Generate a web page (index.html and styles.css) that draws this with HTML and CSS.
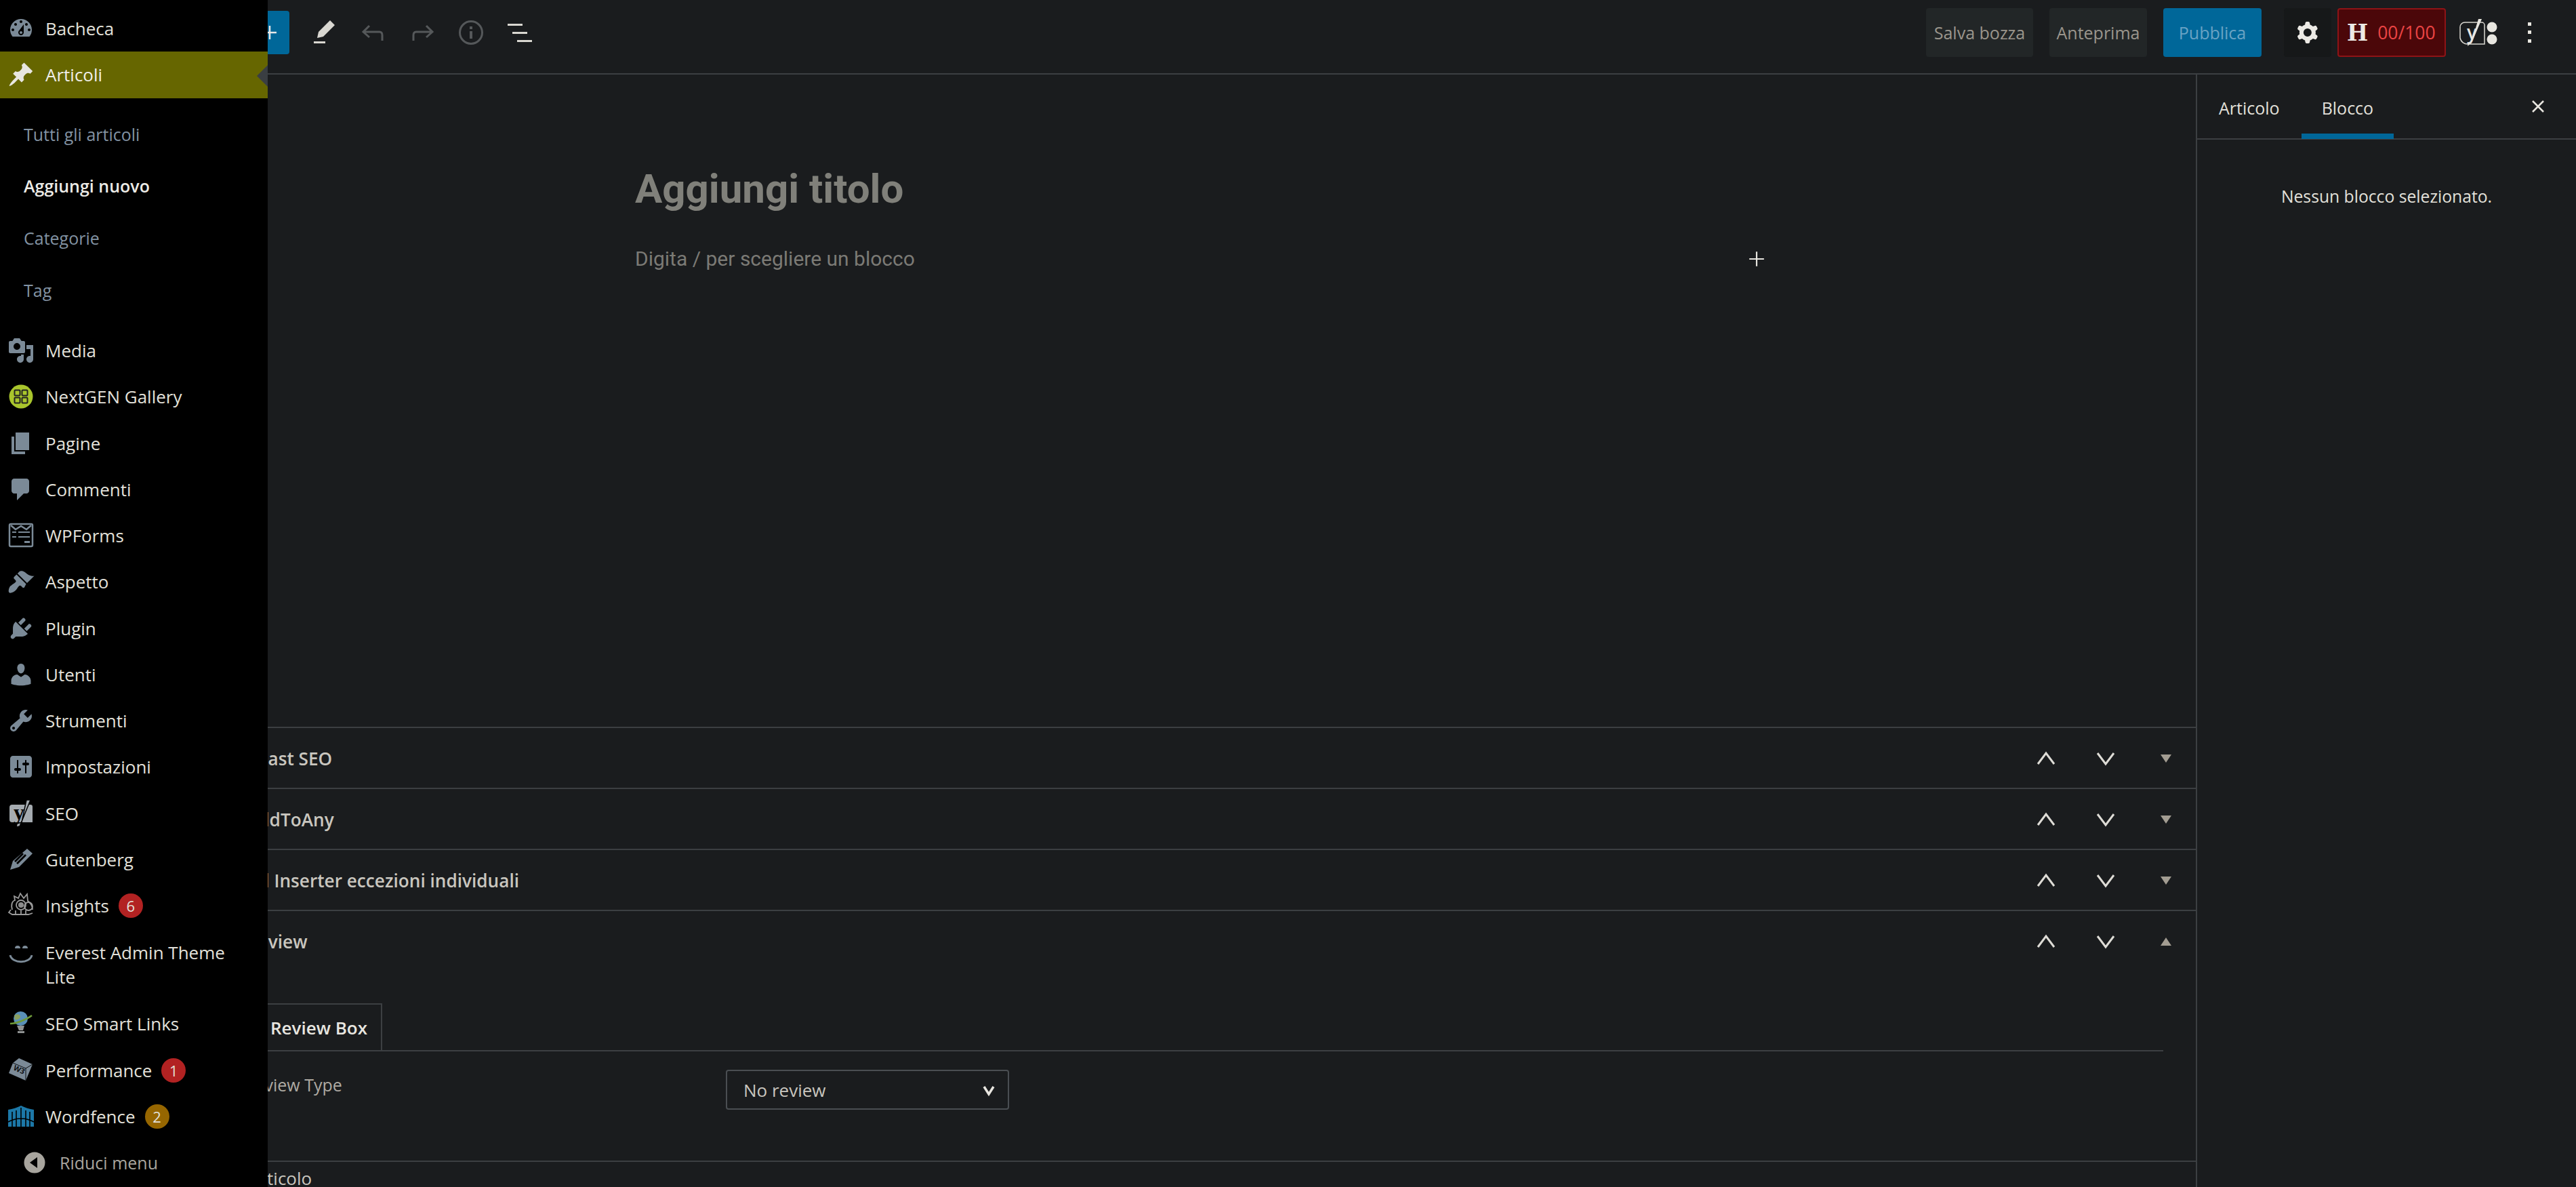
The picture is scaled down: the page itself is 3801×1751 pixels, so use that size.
FILE: index.html
```html
<!DOCTYPE html>
<html lang="it">
<head>
    <meta charset="UTF-8">
    <title>Aggiungi nuovo articolo</title>
    <link rel="stylesheet" href="styles.css">
</head>
<body>
    <nav class="adminmenu">
        <a class="menu-item"><svg class="menu-icon" viewBox="0 0 20 20"><path fill-rule="evenodd" d="M3.76 16h12.48c1.1-1.37 1.76-3.11 1.76-5 0-4.42-3.58-8-8-8s-8 3.58-8 8c0 1.89.66 3.63 1.76 5zM10 4c.55 0 1 .45 1 1s-.45 1-1 1-1-.45-1-1 .45-1 1-1zM6 6c.55 0 1 .45 1 1s-.45 1-1 1-1-.45-1-1 .45-1 1-1zm8 0c.55 0 1 .45 1 1s-.45 1-1 1-1-.45-1-1 .45-1 1-1zm-5.37 5.55L12 7v6c0 1.1-.9 2-2 2s-2-.9-2-2c0-.57.24-1.08.63-1.45zM4 10c.55 0 1 .45 1 1s-.45 1-1 1-1-.45-1-1 .45-1 1-1zm12 0c.55 0 1 .45 1 1s-.45 1-1 1-1-.45-1-1 .45-1 1-1zm-5 3c0-.55-.45-1-1-1s-1 .45-1 1 .45 1 1 1 1-.45 1-1z"/></svg>Bacheca</a>
        <a class="menu-item active"><svg class="menu-icon" viewBox="0 0 20 20"><path d="M10.44 3.02l1.82-1.82 6.36 6.35-1.83 1.82c-1.05-.68-2.48-.57-3.41.36l-.75.75c-.92.93-1.04 2.35-.35 3.41l-1.83 1.82-2.41-2.41-2.8 2.79c-.42.42-3.38 2.71-3.8 2.29s1.86-3.39 2.28-3.81l2.79-2.79L4.1 9.36l1.83-1.82c1.05.69 2.48.57 3.4-.36l.75-.75c.93-.92 1.05-2.35.36-3.41z"/></svg>Articoli</a>
        <div class="submenu">
            <a class="sub-item">Tutti gli articoli</a>
            <a class="sub-item current">Aggiungi nuovo</a>
            <a class="sub-item">Categorie</a>
            <a class="sub-item">Tag</a>
        </div>
        <a class="menu-item"><svg class="menu-icon" viewBox="0 0 20 20"><path fill-rule="evenodd" d="M13 11V4c0-.55-.45-1-1-1h-1.67L9 1H5L3.67 3H2c-.55 0-1 .45-1 1v7c0 .55.45 1 1 1h10c.55 0 1-.45 1-1zM7 4.5c1.38 0 2.5 1.12 2.5 2.5S8.38 9.5 7 9.5 4.5 8.38 4.5 7 5.62 4.5 7 4.5zM14 6h5v10.5c0 1.38-1.12 2.5-2.5 2.5S14 17.88 14 16.5s1.12-2.5 2.5-2.5c.17 0 .34.02.5.05V9h-3V6zm-4 8.05V13h2v3.5c0 1.38-1.12 2.5-2.5 2.5S7 17.88 7 16.5 8.12 14 9.5 14c.17 0 .34.02.5.05z"/></svg>Media</a>
        <a class="menu-item"><svg class="menu-icon" viewBox="0 0 40 40"><circle class="lime" cx="20" cy="20" r="17.5"/><g class="lime-cells"><rect x="10.5" y="10.5" width="8" height="8" rx="1"/><rect x="21.5" y="10.5" width="8" height="8" rx="1"/><rect x="10.5" y="21.5" width="8" height="8" rx="1"/><rect x="21.5" y="21.5" width="8" height="8" rx="1"/></g></svg>NextGEN Gallery</a>
        <a class="menu-item"><svg class="menu-icon" viewBox="0 0 20 20"><path d="M6 15V2h10v13H6zm-1 1h8v2H3V5h2v11z"/></svg>Pagine</a>
        <a class="menu-item"><svg class="menu-icon" viewBox="0 0 20 20"><path d="M5 2h9c1.1 0 2 .9 2 2v7c0 1.1-.9 2-2 2h-2l-5 5v-5H5c-1.1 0-2-.9-2-2V4c0-1.1.9-2 2-2z"/></svg>Commenti</a>
        <a class="menu-item"><svg class="menu-icon" viewBox="0 0 40 40"><g class="outline"><rect x="3" y="3" width="34" height="33" rx="2"/><path d="M5 5l7 6 8-5 8 5 7-6"/></g><path d="M7 14h6v2H7zM16 14h17v2H16zM7 21h6v2H7zM16 21h17v2H16zM25 28h8v3h-8z"/></svg>WPForms</a>
        <a class="menu-item"><svg class="menu-icon" viewBox="0 0 20 20"><path d="M14.48 11.06L7.41 3.99l1.5-1.5c.5-.56 2.3-.47 3.51.32 1.21.8 1.43 1.28 2.91 2.1 1.18.64 2.45 1.26 4.45.85zm-.71.71L6.7 4.7 4.93 6.47c-.39.39-.39 1.02 0 1.41l1.06 1.06c.39.39.39 1.03 0 1.42-.6.6-1.43 1.11-2.21 1.69-.35.26-.7.53-1.01.84C1.43 13.23.28 16.99 1.2 18.01c.88.97 3.56-.34 4.88-1.63.32-.32.59-.67.84-1.02.56-.8 1.07-1.62 1.68-2.22.39-.39 1.02-.39 1.41 0l1.06 1.06c.39.39 1.02.39 1.41 0z"/></svg>Aspetto</a>
        <a class="menu-item"><svg class="menu-icon" viewBox="0 0 20 20"><path d="M13.11 4.36L9.87 7.6 8 5.73l3.24-3.24c.35-.34 1.05-.2 1.56.32.52.51.66 1.21.31 1.55zm-8 1.77l.91-1.12 9.01 9.01-1.19.84c-.71.71-2.63 1.16-3.82 1.16H6.14L4.9 17.26c-.59.59-1.54.59-2.12 0-.59-.58-.59-1.53 0-2.12l1.24-1.24v-3.88c0-1.13.4-3.19 1.09-3.89zm7.26 3.97l3.24-3.24c.34-.35 1.04-.21 1.55.31.52.51.66 1.21.31 1.55l-3.24 3.25z"/></svg>Plugin</a>
        <a class="menu-item"><svg class="menu-icon" viewBox="0 0 20 20"><path d="M10 9.25c-2.27 0-2.73-3.44-2.73-3.44C7 4.02 7.82 2 9.97 2c2.16 0 2.98 2.02 2.71 3.81 0 0-.41 3.44-2.68 3.44zm0 2.57L12.72 10c2.39 0 4.52 2.33 4.52 4.53v2.49s-3.65 1.13-7.24 1.13c-3.65 0-7.24-1.13-7.24-1.13v-2.49c0-2.25 1.94-4.48 4.47-4.48z"/></svg>Utenti</a>
        <a class="menu-item"><svg class="menu-icon" viewBox="0 0 20 20"><path fill-rule="evenodd" d="M16.68 9.77c-1.34 1.34-3.3 1.67-4.95.99l-5.41 6.52c-.99.99-2.59.99-3.58 0s-.99-2.59 0-3.57l6.52-5.42c-.68-1.65-.35-3.61.99-4.95 1.28-1.28 3.12-1.62 4.72-1.06l-2.89 2.89 2.82 2.82 2.86-2.87c.53 1.58.18 3.39-1.08 4.65zM3.81 16.21c.4.39 1.04.39 1.43 0 .4-.4.4-1.04 0-1.43-.39-.4-1.03-.4-1.43 0-.39.39-.39 1.03 0 1.43z"/></svg>Strumenti</a>
        <a class="menu-item"><svg class="menu-icon" viewBox="0 0 20 20"><path fill-rule="evenodd" d="M18 16V4c0-1.1-.9-2-2-2H4c-1.1 0-2 .9-2 2v12c0 1.1.9 2 2 2h12c1.1 0 2-.9 2-2zM8 11h1c.55 0 1 .45 1 1s-.45 1-1 1H8v1.5c0 .28-.22.5-.5.5s-.5-.22-.5-.5V13H6c-.55 0-1-.45-1-1s.45-1 1-1h1V5.5c0-.28.22-.5.5-.5s.5.22.5.5V11zm5-2h-1c-.55 0-1-.45-1-1s.45-1 1-1h1V5.5c0-.28.22-.5.5-.5s.5.22.5.5V7h1c.55 0 1 .45 1 1s-.45 1-1 1h-1v5.5c0 .28-.22.5-.5.5s-.5-.22-.5-.5V9z"/></svg>Impostazioni</a>
        <a class="menu-item"><svg class="menu-icon seo" viewBox="0 0 40 40"><path d="M7 7h27a3 3 0 0 1 3 3v23H7a4 4 0 0 1-4-4V11a4 4 0 0 1 4-4z"/><text class="seo-y" x="9" y="29">y</text><path class="seo-slash" d="M28 0h6L18 39l-5 1 1-5 7-2z"/></svg>SEO</a>
        <a class="menu-item"><svg class="menu-icon" viewBox="0 0 40 40"><path fill-rule="evenodd" d="M29 4l8 7-20 20-13 4 4-13zM26 12L13 25l2 2 13-13zM22 10L10 22l2 2 12-12z"/></svg>Gutenberg</a>
        <a class="menu-item"><svg class="menu-icon" viewBox="0 0 40 40"><g class="crest"><path d="M7 26C5 18 7 13 11 12l-1-6 6 3 3-7 5 7 5-6 1 10c4 3 7 8 7 13"/><path d="M5 26l-3 4 5 3h24l6-2"/><circle cx="20" cy="19" r="7"/><circle cx="31" cy="21" r="6"/><path d="M12 27v6M20 27v6M27 27v6"/></g><circle class="crest-eye" cx="20" cy="19" r="4"/></svg>Insights<span class="count">6</span></a>
        <a class="menu-item tall"><svg class="menu-icon" viewBox="0 0 40 40"><path d="M11 12a4 4 0 0 1 8 0zM22 12a4 4 0 0 1 8 0z"/><path class="smile" d="M4 22c3 13 29 13 32 0"/></svg><span>Everest Admin Theme Lite</span></a>
        <a class="menu-item"><svg class="menu-icon" viewBox="0 0 40 40"><path class="stem" d="M14 23h11l-2 7h-6zM15 31h10v3H15z"/><circle class="globe" cx="19.5" cy="12.5" r="10.5"/><path class="land" d="M10 8c4-3 8-2 9 1s-4 6-8 5z"/><path class="ring" d="M4 20C13 20 28 14 36 8"/></svg>SEO Smart Links</a>
        <a class="menu-item"><svg class="menu-icon" viewBox="0 0 40 40"><path d="M17 2l20 9-10 24L2 24 8 9z"/><path class="cube-line" d="M8 9l19 8 10-6M27 17v18"/><text class="cube-w3" transform="translate(8 19) rotate(24)">W3</text></svg>Performance<span class="count">1</span></a>
        <a class="menu-item"><svg class="menu-icon" viewBox="0 0 40 40"><path class="fence" d="M1 10c7-1 13-3 19-6 6 3 12 5 19 6v25H1z"/><path class="gate" d="M7 13v22M13 11v24M20 7v28M27 11v24M33 13v22M1 28q19-10 38 0"/></svg>Wordfence<span class="count warn">2</span></a>
        <a class="collapse"><svg class="collapse-icon" viewBox="0 0 32 32"><circle cx="16" cy="16" r="15.5"/><path class="collapse-arrow" d="M20 8v16L9 16z"/></svg>Riduci menu</a>
    </nav>
    <div class="editor">
        <header class="topbar">
            <div class="tools">
                <button class="inserter"><svg viewBox="0 0 24 24"><path d="M11 4h2v7h7v2h-7v7h-2v-7H4v-2h7z"/></svg></button>
                <svg class="tool" viewBox="0 0 36 40"><path d="M26 2l7 7-17 17-9 2 2-9zM2 33h17v3H2z"/></svg>
                <svg class="tool dim" viewBox="0 0 36 40"><path class="stroke" d="M12 10l-9 9 9 8M3 19h24c3 0 4 2 4 5v8"/></svg>
                <svg class="tool dim" viewBox="0 0 36 40"><path class="stroke" d="M24 10l9 9-9 8M33 19H9c-3 0-4 2-4 5v8"/></svg>
                <svg class="tool dim" viewBox="0 0 36 40"><circle class="stroke" cx="18" cy="20" r="16.5"/><path d="M16 11h4v4h-4zM16 18h4v11h-4z"/></svg>
                <svg class="tool" viewBox="0 0 36 40"><path d="M0 7h22v3H0zM7 19h22v3H7zM14 31h22v3H14z"/></svg>
            </div>
            <div class="actions">
                <button class="ghost">Salva bozza</button>
                <button class="ghost">Anteprima</button>
                <button class="publish">Pubblica</button>
                <button class="gear"><svg viewBox="0 0 24 24"><path fill-rule="evenodd" d="M10.289 4.836A1 1 0 0111.275 4h1.306a1 1 0 01.987.836l.244 1.466c.787.26 1.503.679 2.108 1.218l1.393-.522a1 1 0 011.216.437l.653 1.13a1 1 0 01-.23 1.273l-1.148.944a6.025 6.025 0 010 2.435l1.149.946a1 1 0 01.23 1.272l-.653 1.13a1 1 0 01-1.216.437l-1.394-.522c-.605.54-1.32.958-2.108 1.218l-.244 1.466a1 1 0 01-.987.836h-1.306a1 1 0 01-.986-.836l-.244-1.466a5.995 5.995 0 01-2.108-1.218l-1.394.522a1 1 0 01-1.217-.436l-.653-1.131a1 1 0 01.23-1.272l1.149-.946a6.026 6.026 0 010-2.435l-1.148-.944a1 1 0 01-.23-1.272l.653-1.131a1 1 0 011.217-.437l1.393.522a5.994 5.994 0 012.108-1.218l.244-1.466zM14.929 12a3 3 0 11-6 0 3 3 0 016 0z"/></svg></button>
                <div class="score"><b>H</b><span>00/100</span></div>
                <svg class="yoast" viewBox="0 0 56 44"><path class="yoast-box" d="M8 7h25a4 4 0 0 1 4 4v28H13a11 11 0 0 1-12-9V14a7 7 0 0 1 7-7z"/><text x="11" y="32">y</text><path d="M28 2h5L18 37l-6 5 1-5 5-2z"/><circle cx="48" cy="14" r="7.5"/><circle cx="48" cy="32" r="7.5"/></svg>
                <svg class="kebab" viewBox="0 0 8 32"><path d="M1 1h5v5H1zM1 13h5v5H1zM1 26h5v5H1z"/></svg>
            </div>
        </header>
        <div class="workspace">
            <main class="main">
                <section class="canvas">
                    <h1 class="title">Aggiungi titolo</h1>
                    <div class="block">
                        <p class="placeholder">Digita / per scegliere un blocco</p>
                        <svg class="add" viewBox="0 0 24 24"><path d="M11 2h2v9h9v2h-9v9h-2v-9H2v-2h9z"/></svg>
                    </div>
                </section>
                <section class="metabox">
                    <h2>Yoast SEO</h2>
                    <svg class="chev" viewBox="0 0 28 28"><path d="M2 22L14 6l12 16"/></svg>
                    <svg class="chev" viewBox="0 0 28 28"><path d="M2 6l12 16L26 6"/></svg>
                    <i class="caret"></i>
                </section>
                <section class="metabox">
                    <h2>AddToAny</h2>
                    <svg class="chev" viewBox="0 0 28 28"><path d="M2 22L14 6l12 16"/></svg>
                    <svg class="chev" viewBox="0 0 28 28"><path d="M2 6l12 16L26 6"/></svg>
                    <i class="caret"></i>
                </section>
                <section class="metabox">
                    <h2>Ad Inserter eccezioni individuali</h2>
                    <svg class="chev" viewBox="0 0 28 28"><path d="M2 22L14 6l12 16"/></svg>
                    <svg class="chev" viewBox="0 0 28 28"><path d="M2 6l12 16L26 6"/></svg>
                    <i class="caret"></i>
                </section>
                <section class="metabox">
                    <h2>Review</h2>
                    <svg class="chev" viewBox="0 0 28 28"><path d="M2 22L14 6l12 16"/></svg>
                    <svg class="chev" viewBox="0 0 28 28"><path d="M2 6l12 16L26 6"/></svg>
                    <i class="caret up"></i>
                </section>
                <section class="review">
                    <div class="tabline"><div class="review-tab">Review Box</div></div>
                    <div class="field">
                        <label>Review Type</label>
                        <div class="select">No review<svg viewBox="0 0 20 20"><path d="M3 5l7 11 7-11"/></svg></div>
                    </div>
                </section>
                <footer class="crumb">Articolo</footer>
            </main>
            <aside class="settings">
                <div class="settings-tabs">
                    <span class="stab">Articolo</span>
                    <span class="stab on">Blocco</span>
                    <svg class="close" viewBox="0 0 20 20"><path d="M2 2l16 16M18 2L2 18"/></svg>
                </div>
                <p class="empty">Nessun blocco selezionato.</p>
            </aside>
        </div>
    </div>
</body>
</html>
```

FILE: styles.css
```css
* {
    box-sizing: border-box;
}
body {
    margin: 0;
    height: 100vh;
    overflow: hidden;
    background: #1a1c1e;
    color: #e2e0da;
    font-family: "Open Sans", "Noto Sans", sans-serif;
    font-size: 26px;
}
h1, h2, p {
    margin: 0;
}
button {
    font-family: inherit;
    border: none;
}

/* admin menu sits over the editor */
.adminmenu {
    position: absolute;
    left: 0;
    top: 0;
    bottom: 0;
    width: 395px;
    padding-top: 8px;
    background: #000;
    overflow: hidden;
    z-index: 2;
}
.menu-item {
    display: flex;
    align-items: center;
    height: 68.25px;
    padding-left: 11px;
    color: #e2e0da;
}
.menu-item.tall {
    align-items: flex-start;
    height: 106px;
    padding: 17px 40px 0 11px;
    line-height: 36px;
}
.menu-item.active {
    position: relative;
    background: #666600;
    color: #f0eee8;
}
.menu-item.active::after {
    content: "";
    position: absolute;
    right: 0;
    top: 20px;
    border: 16px solid transparent;
    border-left: 0;
    border-right-color: #3a3e42;
}
.menu-icon {
    flex: none;
    width: 40px;
    height: 40px;
    margin-right: 16px;
    fill: #7b8a97;
}
.active .menu-icon {
    fill: #e8e6e0;
}
.outline {
    fill: none;
    stroke: #7b8a97;
    stroke-width: 2.5;
}
.lime {
    fill: #a9c52c;
}
.lime-cells rect {
    fill: none;
    stroke: #222;
    stroke-width: 2;
}
.seo {
    fill: #a5abb0;
}
.seo-y {
    fill: #000;
    font-family: "Liberation Serif", serif;
    font-weight: bold;
    font-size: 32px;
}
.seo-slash {
    stroke: #000;
    stroke-width: 1.5;
}
.crest {
    fill: none;
    stroke: #9a9a9a;
    stroke-width: 1.8;
}
.crest-eye {
    fill: #8c8c8c;
}
.smile {
    fill: none;
    stroke: #7b8a97;
    stroke-width: 3;
}
.stem {
    fill: #8f9292;
}
.globe {
    fill: #5a90b8;
}
.land {
    fill: #8aa060;
}
.ring {
    fill: none;
    stroke: #6f9a3a;
    stroke-width: 2.5;
}
.cube-line {
    fill: none;
    stroke: #0d0f11;
    stroke-width: 1;
}
.cube-w3 {
    fill: #0d0f11;
    font-size: 11px;
    font-weight: 700;
}
.fence {
    fill: #1c78a8;
}
.gate {
    fill: none;
    stroke: #000;
    stroke-width: 1.6;
}
.count {
    display: inline-flex;
    align-items: center;
    justify-content: center;
    width: 36px;
    height: 36px;
    margin-left: 14px;
    border-radius: 50%;
    background: #b22222;
    font-size: 22px;
}
.count.warn {
    background: #966600;
}
.collapse {
    display: flex;
    align-items: center;
    height: 68px;
    padding-left: 35px;
    color: #a8a59e;
    font-size: 25px;
}
.collapse-icon {
    width: 32px;
    height: 32px;
    margin-right: 21px;
    fill: #a8a59e;
}
.collapse-arrow {
    fill: #000;
}
.submenu {
    padding: 15px 0 17px;
}
.sub-item {
    display: flex;
    align-items: center;
    height: 76.6px;
    padding-left: 35px;
    color: #8292a2;
    font-size: 25px;
}
.sub-item.current {
    color: #ecebe6;
    font-weight: 600;
}

/* editor */
.editor {
    display: flex;
    flex-direction: column;
    height: 100vh;
}
.topbar {
    display: flex;
    justify-content: space-between;
    align-items: center;
    flex: none;
    height: 110px;
    padding: 0 64px 12px 340px;
    border-bottom: 2px solid #3c3f42;
}
.tools, .actions {
    display: flex;
    align-items: center;
}
.inserter {
    display: flex;
    align-items: center;
    justify-content: flex-end;
    width: 87px;
    height: 64px;
    margin-right: 34px;
    padding: 0 14px;
    border-radius: 4px;
    background: #006799;
}
.inserter svg {
    width: 30px;
    height: 30px;
    fill: #e8e8e8;
}
.tool {
    width: 36px;
    height: 40px;
    margin-right: 36px;
    fill: #d9d7d1;
}
.tool.dim {
    fill: #55585a;
}
.stroke {
    fill: none;
    stroke: #55585a;
    stroke-width: 3;
}
.actions button, .score {
    height: 72px;
    border-radius: 4px;
    font-size: 25px;
}
.ghost {
    width: 158px;
    margin-right: 24px;
    background: #222627;
    color: #9a958c;
}
.ghost + .ghost {
    width: 144px;
}
.publish {
    width: 145px;
    margin-right: 33px;
    background: #006799;
    color: #6aa3c4;
}
.gear {
    display: flex;
    align-items: center;
    justify-content: center;
    width: 70px;
    margin-right: 9px;
    padding: 0;
    background: #161819;
}
.gear svg {
    width: 48px;
    height: 48px;
    fill: #eceae5;
}
.actions .score {
    display: flex;
    align-items: center;
    width: 160px;
    padding-left: 12px;
    border: 2px solid #8e1316;
    background: #4b0709;
    color: #ea4444;
    font-size: 26.5px;
}
.score b {
    margin-right: 14px;
    color: #eceae5;
    font-family: "DejaVu Serif", serif;
    font-size: 33px;
}
.yoast {
    width: 56px;
    height: 44px;
    margin-left: 20px;
    fill: #e8e6e0;
}
.yoast-box {
    fill: none;
    stroke: #d9d7d1;
    stroke-width: 1.5;
}
.yoast text {
    font-size: 28px;
    font-weight: 600;
}
.kebab {
    width: 8px;
    height: 32px;
    margin-left: 44px;
    fill: #e8e6e0;
}
.workspace {
    display: flex;
    flex: 1;
    min-height: 0;
}
.main {
    display: flex;
    flex-direction: column;
    flex: 1;
    min-width: 0;
}
.canvas {
    flex: 1;
    padding: 133px 0 0 937px;
    font-family: Roboto, sans-serif;
}
.title {
    color: #80807a;
    font-size: 60px;
    font-weight: 700;
    line-height: 72px;
}
.block {
    display: flex;
    align-items: center;
    justify-content: space-between;
    width: 1668px;
    margin-top: 45px;
}
.placeholder {
    color: #7b7a75;
    font-size: 30px;
    line-height: 44px;
}
.add {
    width: 26px;
    height: 26px;
    fill: #e8e6e0;
}
.metabox {
    display: flex;
    align-items: center;
    flex: none;
    height: 90px;
    padding: 2px 36px 0 364px;
    border-top: 2px solid #3c3f42;
}
.metabox h2 {
    flex: 1;
    color: #c9c6bf;
    font-size: 26.2px;
    font-weight: 600;
}
.chev {
    width: 28px;
    height: 28px;
    margin-left: 60px;
    fill: none;
    stroke: #dedcd6;
    stroke-width: 3;
}
.caret {
    width: 0;
    height: 0;
    margin-left: 67px;
    border: 8px solid transparent;
    border-top: 12px solid #a39d92;
    border-bottom: 0;
}
.caret.up {
    border-top: 0;
    border-bottom: 12px solid #a39d92;
}
.review {
    flex: none;
    height: 282px;
    padding: 0 48px 0 340px;
    border-bottom: 2px solid #3c3f42;
}
.tabline {
    display: flex;
    padding-top: 48px;
    border-bottom: 2px solid #3c3f42;
}
.review-tab {
    width: 224px;
    height: 69px;
    padding: 16px 0 0 57px;
    border: 2px solid #3c3f42;
    border-bottom: 0;
    color: #e8e6e0;
    font-weight: 600;
}
.field {
    display: flex;
    padding: 27px 0 0 21px;
}
.field label {
    width: 710px;
    padding-top: 5px;
    color: #aeaaa3;
    font-size: 25px;
}
.select {
    display: flex;
    align-items: center;
    justify-content: space-between;
    width: 418px;
    height: 59px;
    padding: 0 18px 0 24px;
    border: 2px solid #4a4e52;
    border-radius: 4px;
    color: #c9c6bf;
}
.select svg {
    width: 20px;
    height: 20px;
    fill: none;
    stroke: #e8e6e0;
    stroke-width: 3.5;
}
.crumb {
    flex: none;
    height: 37px;
    padding: 6px 0 0 367px;
    color: #c9c6bf;
}
.settings {
    flex: none;
    width: 561px;
    border-left: 2px solid #3c3f42;
    font-size: 25px;
}
.settings-tabs {
    display: flex;
    align-items: center;
    height: 96px;
    padding: 4px 46px 0 32px;
    border-bottom: 2px solid #3c3f42;
}
.stab {
    position: relative;
    margin-right: 62px;
}
.stab.on::after {
    content: "";
    position: absolute;
    left: -30px;
    right: -30px;
    top: 55px;
    height: 8px;
    background: #006799;
}
.close {
    width: 20px;
    height: 20px;
    margin-left: auto;
    margin-bottom: 4px;
    fill: none;
    stroke: #e8e6e0;
    stroke-width: 2.5;
}
.empty {
    padding-top: 67px;
    font-size: 24.7px;
    text-align: center;
}
```
